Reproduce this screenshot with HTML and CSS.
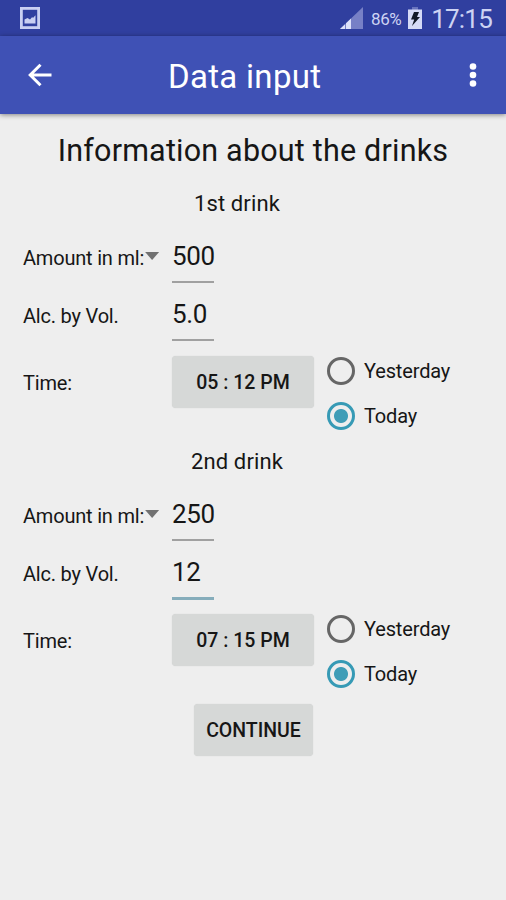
FILE: index.html
```html
<!DOCTYPE html>
<html lang="en">
<head>
<meta charset="utf-8">
<title>Data input</title>
<link rel="stylesheet" href="styles.css">
</head>
<body>
<div class="status">
  <svg class="status-picture" width="20" height="22" viewBox="0 0 20 22"><rect x="1.4" y="1.4" width="17.2" height="19.2" fill="none" stroke="#c9cff2" stroke-width="2.8"/><path d="M4.500 16.500v-4l3-1.600 2.500 1.500 2-2.200 1.200.6 2.300-2.500v8.200z" fill="#c9cff2"/></svg>
  <svg class="signal" width="23" height="22" viewBox="0 0 23 22"><path d="M23 0v22H0z" fill="#7780c6"/><path d="M5 17.200V22H0zM11 11.500V22H6v-5.800z" fill="#dde1fa"/></svg>
  <span class="percent">86%</span>
  <svg class="battery" width="14" height="22" viewBox="0 0 14 22"><path d="M4 0h6v3H4z" fill="#6873bd"/><path d="M0 2.500h14V22H0z" fill="#d5daf6"/><path d="M6 5h5L9 10h3l-8 9 2.200-6.500H3z" fill="#111827"/></svg>
  <span class="clock">17:15</span>
</div>
<header class="bar">
  <svg class="back" width="24" height="24" viewBox="0 0 24 24"><path d="M23.500 12H2.500M12.500 1.700L2.200 12l10.300 10.300" fill="none" stroke="#fff" stroke-width="3"/></svg>
  <h1 class="title">Data input</h1>
  <svg class="more" width="8" height="26" viewBox="0 0 8 26"><g fill="#fff"><circle cx="4" cy="4.500" r="3.300"/><circle cx="4" cy="13" r="3.300"/><circle cx="4" cy="21.500" r="3.300"/></g></svg>
</header>
<main>
  <h2 class="heading"><span>Information about the drinks</span></h2>
  <section class="drink">
    <h3 class="name"><span>1st drink</span></h3>
    <div class="row"><div class="label"><span>Amount in ml:</span><i class="caret"></i></div><div class="field">500</div></div>
    <div class="row"><div class="label"><span>Alc. by Vol.</span></div><div class="field">5.0</div></div>
    <div class="row time"><div class="label"><span>Time:</span></div><button class="button">05 : 12 PM</button>
      <div class="days"><div class="day"><i class="radio"></i><span>Yesterday</span></div><div class="day"><i class="radio on"></i><span>Today</span></div></div></div>
  </section>
  <section class="drink">
    <h3 class="name"><span>2nd drink</span></h3>
    <div class="row"><div class="label"><span>Amount in ml:</span><i class="caret"></i></div><div class="field">250</div></div>
    <div class="row"><div class="label"><span>Alc. by Vol.</span></div><div class="field focus">12</div></div>
    <div class="row time"><div class="label"><span>Time:</span></div><button class="button">07 : 15 PM</button>
      <div class="days"><div class="day"><i class="radio"></i><span>Yesterday</span></div><div class="day"><i class="radio on"></i><span>Today</span></div></div></div>
  </section>
  <button class="button continue">CONTINUE</button>
</main>
</body>
</html>
```
FILE: styles.css
```css
* { box-sizing: border-box; }
body { margin: 0; height: 900px; background: #eee; color: #161616; font-family: Roboto, sans-serif; overflow: hidden; }
h1, h2, h3 { margin: 0; font-weight: 400; }
svg { display: block; flex: none; }
span { white-space: nowrap; }
.status { display: flex; height: 36px; padding: 7px 14px 0 20px; background: #303f9f; color: #cdd3f3; }
.signal { margin-left: 300px; }
.percent { width: 32px; margin-left: 8px; font-size: 17px; line-height: 24px; letter-spacing: -0.4px; }
.battery { margin-left: 6px; }
.clock { margin-left: 9px; font-size: 26px; line-height: 24px; letter-spacing: -0.8px; }
.bar { display: flex; align-items: center; height: 78px; padding: 0 29px 0 28px; background: #3f51b5; color: #fff; box-shadow: 0 1px 5px rgba(0, 0, 0, .45); }
.title { margin-left: 116px; font-size: 33px; line-height: 40px; letter-spacing: 0.3px; padding-top: 3px; white-space: nowrap; }
.more { margin-left: auto; }
.heading { height: 69px; padding-top: 17px; font-size: 30.5px; line-height: 40px; letter-spacing: 0.2px; text-align: center; }
.drink { height: 258px; }
.name { height: 45px; padding: 1px 32px 0 0; font-size: 22px; line-height: 40px; letter-spacing: 0.1px; text-align: center; }
.row { display: flex; height: 58px; padding-left: 23px; }
.label { display: flex; width: 149px; height: 58px; align-items: center; padding-top: 1px; font-size: 20px; letter-spacing: -0.2px; }
.caret { width: 14px; height: 8px; margin: -3px 0 0 1px; background: #717171; clip-path: polygon(0 0, 100% 0, 50% 100%); }
.field { width: 42px; height: 55px; padding-top: 8px; border-bottom: 2px solid #a0a0a0; font-size: 26px; line-height: 40px; letter-spacing: -0.4px; }
.field.focus { height: 56px; border-bottom: 3px solid #86adbb; }
.row.time { height: 97px; }
.time .label { height: 76px; }
.button { width: 142px; height: 52px; margin-top: 12px; padding: 0; border: 0; border-radius: 4px; background: #d6d8d7; box-shadow: 0 0 1px #c7c9c8; color: #161616; font: 500 19.5px Roboto, sans-serif; }
.days { margin: 4px 0 0 13px; }
.day { display: flex; height: 45px; align-items: center; font-size: 20px; letter-spacing: -0.15px; }
.radio { width: 28px; height: 28px; margin-right: 9px; border: 3px solid #666; border-radius: 50%; }
.radio.on { border-color: #369ab5; background: radial-gradient(circle, #3f9db7 6.500px, transparent 7.500px); }
.continue { display: block; width: 119px; margin: 5px 0 0 194px; }
```
